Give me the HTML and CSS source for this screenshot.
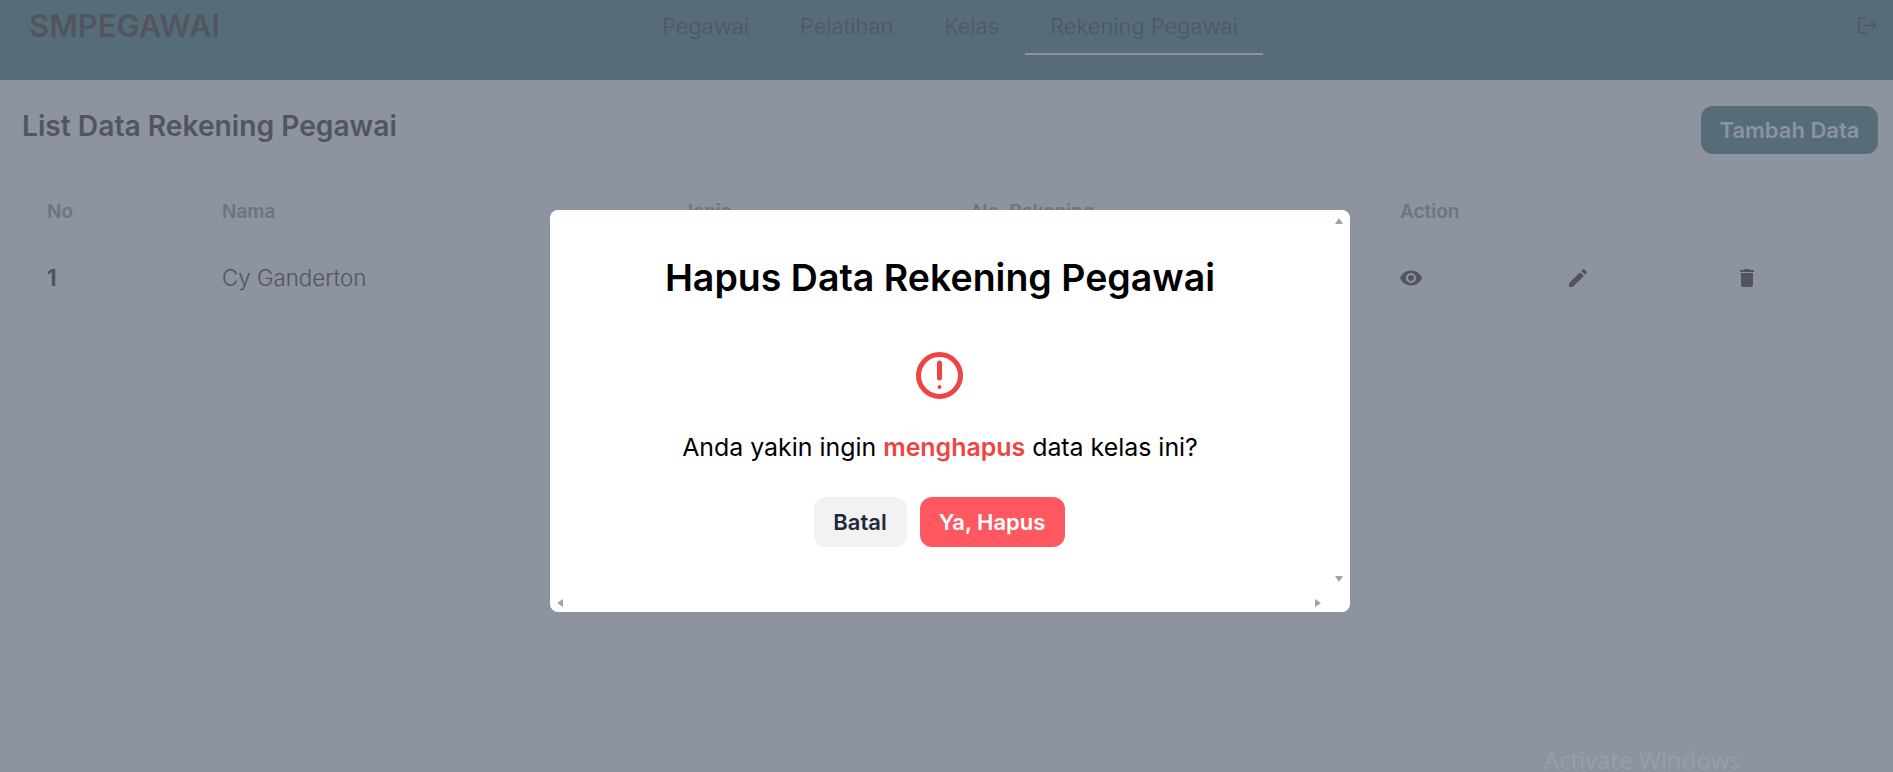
FILE: index.html
```html
<!DOCTYPE html>
<html>
<head>
    <meta charset="utf-8">
    <title>SMPEGAWAI</title>
    <link rel="stylesheet" href="styles.css">
</head>
<body>
    <nav class="navbar">
        <a class="brand">SMPEGAWAI</a>
        <div class="tabs">
            <a class="tab">Pegawai</a>
            <a class="tab">Pelatihan</a>
            <a class="tab">Kelas</a>
            <a class="tab active">Rekening Pegawai</a>
        </div>
        <svg class="logout" viewBox="0 0 18 17" width="18" height="17">
            <path d="M8 1H1v15h7M5.5 8.5h12M13.5 4.5l4 4-4 4"/>
        </svg>
    </nav>

    <main class="content">
        <div class="page-head">
            <h2>List Data Rekening Pegawai</h2>
            <button class="btn-add">Tambah Data</button>
        </div>

        <div class="table">
            <div class="cell head">No</div>
            <div class="cell head">Nama</div>
            <div class="cell head">Jenis</div>
            <div class="cell head">No. Rekening</div>
            <div class="cell head wide">Action</div>

            <div class="cell num">1</div>
            <div class="cell">Cy Ganderton</div>
            <div class="cell"></div>
            <div class="cell"></div>
            <div class="cell">
                <svg class="icon" viewBox="0 0 24 24"><path d="M12 4.5C7 4.5 2.73 7.61 1 12c1.73 4.39 6 7.5 11 7.5s9.27-3.11 11-7.5c-1.73-4.39-6-7.5-11-7.5zM12 17c-2.76 0-5-2.24-5-5s2.24-5 5-5 5 2.24 5 5-2.24 5-5 5zm0-8c-1.66 0-3 1.34-3 3s1.34 3 3 3 3-1.34 3-3-1.34-3-3-3z"/></svg>
            </div>
            <div class="cell">
                <svg class="icon" viewBox="0 0 24 24"><path d="M3 17.25V21h3.75L17.81 9.94l-3.75-3.75L3 17.25zM20.71 7.04c.39-.39.39-1.02 0-1.41l-2.34-2.34c-.39-.39-1.02-.39-1.41 0l-1.83 1.83 3.75 3.75 1.83-1.83z"/></svg>
            </div>
            <div class="cell">
                <svg class="icon" viewBox="0 0 24 24"><path d="M6 19c0 1.1.9 2 2 2h8c1.1 0 2-.9 2-2V7H6v12zM19 4h-3.5l-1-1h-5l-1 1H5v2h14V4z"/></svg>
            </div>
        </div>
    </main>

    <div class="modal">
        <div class="modal-box">
            <h1>Hapus Data Rekening Pegawai</h1>
            <svg class="alert" viewBox="0 0 47 47" width="47" height="47">
                <circle cx="23.5" cy="23.5" r="21"/>
                <path d="M23.5 11v15"/>
                <circle class="dot" cx="23.5" cy="35" r="2"/>
            </svg>
            <p>Anda yakin ingin <b>menghapus</b> data kelas ini?</p>
            <div class="actions">
                <button class="btn-cancel">Batal</button>
                <button class="btn-delete">Ya, Hapus</button>
            </div>
            <i class="arrow up"></i>
            <i class="arrow down"></i>
            <i class="arrow left"></i>
            <i class="arrow right"></i>
        </div>
    </div>

    <div class="watermark">Activate Windows</div>
</body>
</html>
```

FILE: styles.css
```css
* {
    box-sizing: border-box;
}

html, body {
    height: 100%;
}

body {
    margin: 0;
    overflow: hidden;
    font-family: Inter, "Liberation Sans", sans-serif;
    color: #52555f;
    background-color: #8d939f;
}

.navbar {
    display: grid;
    grid-template-columns: 1fr auto 1fr;
    height: 80px;
    padding: 0 22px 0 29px;
    background-color: #566d79;
}

.brand {
    margin-top: 8px;
    font-size: 31px;
    line-height: 36px;
    font-weight: 600;
}

.tabs {
    display: flex;
    gap: 1px;
    height: 55px;
}

.tab {
    padding: 12px 25px 0;
    font-size: 22px;
    line-height: 28px;
    font-weight: 300;
    border-bottom: 2px solid transparent;
}

.tab.active {
    border-bottom-color: #8d939f;
}

.logout {
    justify-self: end;
    margin: 17px -5px 0 0;
    fill: none;
    stroke: #52555f;
    stroke-width: 1.5;
}

.content {
    padding: 26px 15px 0 22px;
}

.page-head {
    display: flex;
    justify-content: space-between;
    align-items: flex-start;
}

.page-head h2 {
    margin: 0;
    font-size: 28.2px;
    line-height: 40px;
    font-weight: 600;
}

.btn-add {
    width: 177px;
    height: 48px;
    border: 0;
    border-radius: 12px;
    color: #8d939f;
    background-color: #566d79;
    font: 600 22px Inter, sans-serif;
}

.table {
    display: grid;
    grid-template-columns: 175px 460px 291px 426px 167px 169px 1fr;
    grid-auto-rows: 67px;
    margin-top: 23px;
    padding-left: 25px;
    align-items: center;
}

.cell {
    font-size: 22.3px;
    font-weight: 300;
}

.cell.head {
    padding-top: 2px;
    font-size: 19px;
    font-weight: 600;
    color: #6f7480;
}

.cell.wide {
    grid-column: span 3;
    padding-left: 1px;
}

.cell.num {
    font-weight: 700;
}

.icon {
    display: block;
    width: 24px;
    height: 24px;
    fill: #52555f;
}

.modal {
    position: fixed;
    inset: 0;
    padding: 210px 0 0 550px;
}

.modal-box {
    position: relative;
    display: flex;
    flex-direction: column;
    align-items: center;
    width: 800px;
    height: 402px;
    padding: 42px 20px 0 0;
    border-radius: 8px;
    color: #000;
    background-color: #fff;
}

.modal-box h1 {
    margin: 0;
    font-size: 37.5px;
    line-height: 52px;
    font-weight: 600;
}

.alert {
    margin: 48px 2px 0 0;
    fill: none;
    stroke: #ef4444;
    stroke-width: 5;
    stroke-linecap: round;
}

.alert .dot {
    fill: #ef4444;
    stroke: none;
}

.modal-box p {
    margin: 31px 0 0;
    font-size: 24.9px;
    line-height: 34px;
}

.modal-box b {
    font-weight: 600;
    color: #ef4444;
}

.actions {
    display: flex;
    gap: 13px;
    margin: 33px 2px 0 0;
}

.actions button {
    height: 50px;
    border: 0;
    border-radius: 12px;
    font: 600 22px Inter, sans-serif;
}

.btn-cancel {
    width: 93px;
    color: #1f2937;
    background-color: #f2f2f2;
}

.btn-delete {
    width: 145px;
    color: #fff;
    background-color: #ff5861;
}

.arrow {
    position: absolute;
    width: 0;
    height: 0;
    border: 4px solid transparent;
}

.arrow.up {
    top: 8px;
    right: 7px;
    border-top: 0;
    border-bottom: 6px solid #a3a3a3;
}

.arrow.down {
    top: 366px;
    right: 7px;
    border-bottom: 0;
    border-top: 6px solid #a3a3a3;
}

.arrow.left {
    top: 389px;
    left: 7px;
    border-left: 0;
    border-right: 6px solid #a3a3a3;
}

.arrow.right {
    top: 389px;
    left: 765px;
    border-right: 0;
    border-left: 6px solid #a3a3a3;
}

.watermark {
    position: fixed;
    left: 1544px;
    top: 744px;
    font-family: "Open Sans", sans-serif;
    font-size: 24px;
    line-height: 32px;
    color: #9a9ea8;
}
```
